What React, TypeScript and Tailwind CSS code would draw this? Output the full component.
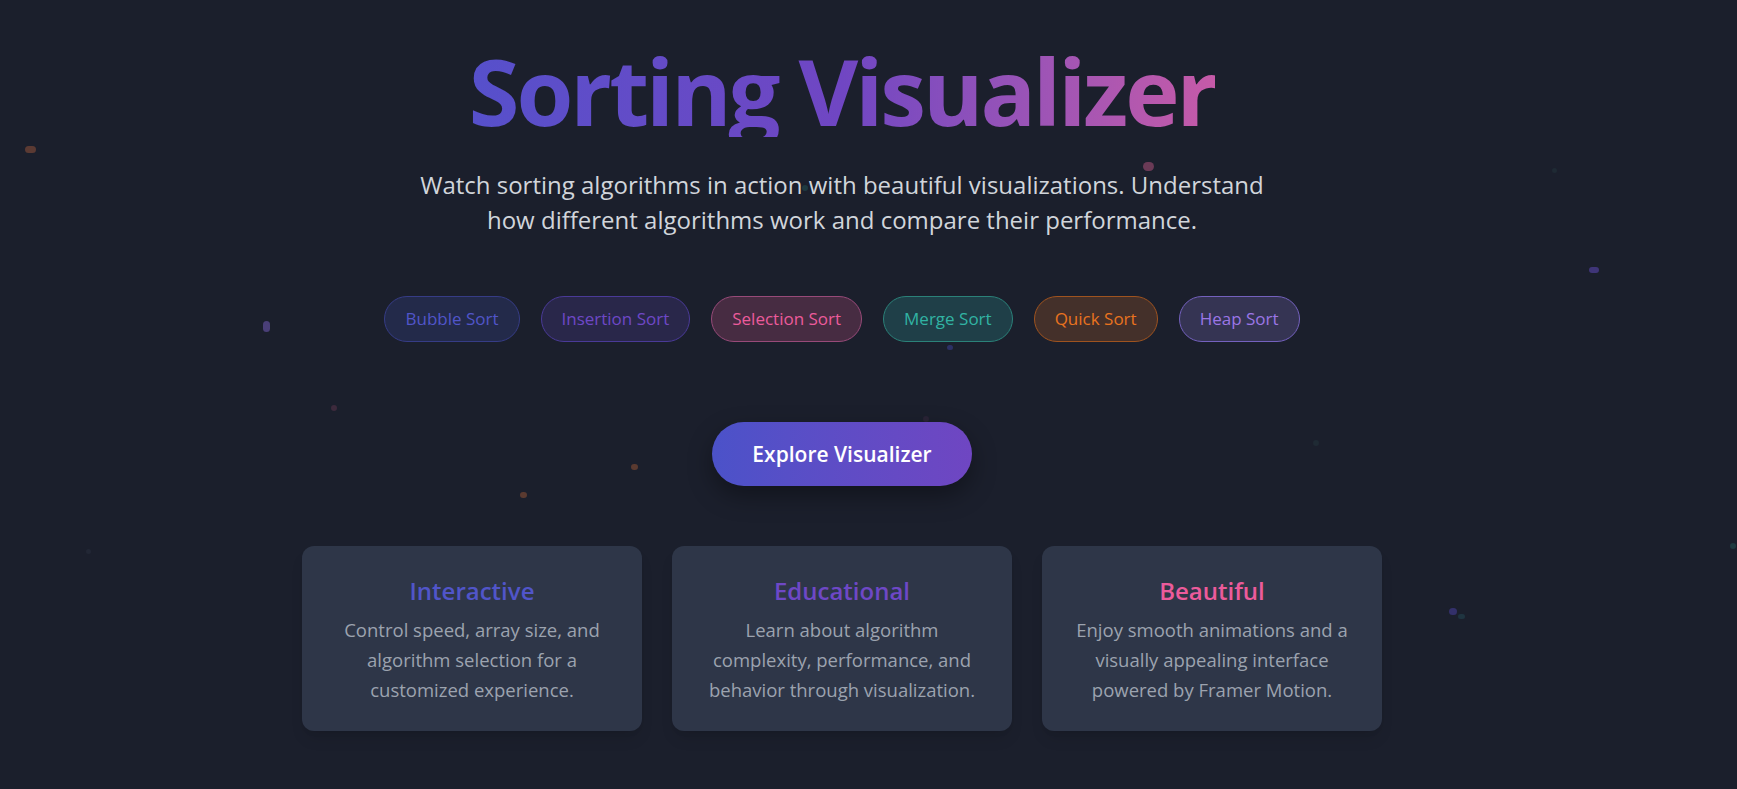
import React from 'react'

// 背景中漂浮的小粒子
const particles = [
  { x: 30, y: 149, w: 11, h: 7, c: 'bg-[#5b3a33]' },
  { x: 266, y: 326, w: 7, h: 11, c: 'bg-[#4a3f78]' },
  { x: 334, y: 408, w: 6, h: 6, c: 'bg-[#3d2a3c]' },
  { x: 523, y: 495, w: 7, h: 6, c: 'bg-[#5a3a30]' },
  { x: 634, y: 467, w: 7, h: 6, c: 'bg-[#5a3a30]' },
  { x: 1148, y: 166, w: 11, h: 9, c: 'bg-[#6a3a56]' },
  { x: 1594, y: 270, w: 10, h: 6, c: 'bg-[#3f3578]' },
  { x: 1453, y: 611, w: 8, h: 7, c: 'bg-[#33306a]' },
  { x: 1461, y: 616, w: 7, h: 5, c: 'bg-[#1f3440]' },
  { x: 950, y: 347, w: 6, h: 5, c: 'bg-[#2c3065]' },
  { x: 926, y: 419, w: 6, h: 6, c: 'bg-[#2a2436]' },
  { x: 1316, y: 443, w: 6, h: 6, c: 'bg-[#1f2a34]' },
  { x: 1554, y: 170, w: 5, h: 5, c: 'bg-[#1f2a34]' },
  { x: 805, y: 188, w: 6, h: 6, c: 'bg-[#1f3a40]' },
  { x: 1733, y: 546, w: 6, h: 6, c: 'bg-[#1f3a40]' },
  { x: 88, y: 551, w: 5, h: 5, c: 'bg-[#222735]' },
]

const algorithms = [
  { name: 'Bubble Sort', cls: 'bg-[#232a4a] border-[#363c86] text-[#5155c9]' },
  { name: 'Insertion Sort', cls: 'bg-[#29274a] border-[#4a3a98] text-[#6e48c6]' },
  { name: 'Selection Sort', cls: 'bg-[#472c42] border-[#984a79] text-[#ec5b9b]' },
  { name: 'Merge Sort', cls: 'bg-[#1f3f48] border-[#2b8179] text-[#31b3a3]' },
  { name: 'Quick Sort', cls: 'bg-[#44302a] border-[#9f531f] text-[#e9731f]' },
  { name: 'Heap Sort', cls: 'bg-[#353453] border-[#7461be] text-[#9b76e6]' },
]

const features = [
  {
    title: 'Interactive',
    color: 'text-[#5155c9]',
    text: 'Control speed, array size, and algorithm selection for a customized experience.',
  },
  {
    title: 'Educational',
    color: 'text-[#6e48c6]',
    text: 'Learn about algorithm complexity, performance, and behavior through visualization.',
  },
  {
    title: 'Beautiful',
    color: 'text-[#ec5b9b]',
    text: 'Enjoy smooth animations and a visually appealing interface powered by Framer Motion.',
  },
]

export default function App() {
  return (
    <div className="relative min-h-screen overflow-hidden bg-[#1b1f2c] font-['Open_Sans',sans-serif]">
      {particles.map((p, i) => (
        <span
          key={i}
          className={`absolute rounded-full blur-[0.5px] ${p.c}`}
          style={{ left: p.x - p.w / 2, top: p.y - p.h / 2, width: p.w, height: p.h }}
        />
      ))}

      <div className="relative w-[1684px] flex flex-col items-center pt-[45px] pb-10">
        {/* 标题 */}
        <h1 className="text-[92px] leading-none font-bold tracking-[-3px] bg-gradient-to-r from-[#5650cb] via-[#7046c3] to-[#c65aa8] bg-clip-text text-transparent">
          Sorting Visualizer
        </h1>

        <p className="mt-[30px] max-w-[850px] text-center text-2xl leading-[35px] text-[#d1d5db]">
          Watch sorting algorithms in action with beautiful visualizations. Understand how
          different algorithms work and compare their performance.
        </p>

        {/* 算法标签 */}
        <div className="mt-[59px] flex items-center gap-[21px]">
          {algorithms.map(a => (
            <span
              key={a.name}
              className={`rounded-full border px-5 py-2.5 text-[17px] leading-6 ${a.cls}`}
            >
              {a.name}
            </span>
          ))}
        </div>

        <button className="mt-20 rounded-full bg-gradient-to-r from-[#4b52c9] to-[#6f46c2] px-10 py-[18px] text-[21px] leading-7 font-semibold text-white shadow-[0_10px_25px_rgba(0,0,0,0.35)]">
          Explore Visualizer
        </button>

        {/* 特性卡片 */}
        <div className="mt-[60px] grid grid-cols-3 gap-[30px]">
          {features.map(f => (
            <div
              key={f.title}
              className="w-[340px] h-[185px] rounded-xl bg-[#2e3648] px-[26px] pt-[29px] pb-6 text-center shadow-lg"
            >
              <h3 className={`text-2xl leading-8 font-semibold ${f.color}`}>{f.title}</h3>
              <p className="mt-2 text-[18.5px] leading-[30px] text-[#9ca3af]">{f.text}</p>
            </div>
          ))}
        </div>
      </div>
    </div>
  )
}
